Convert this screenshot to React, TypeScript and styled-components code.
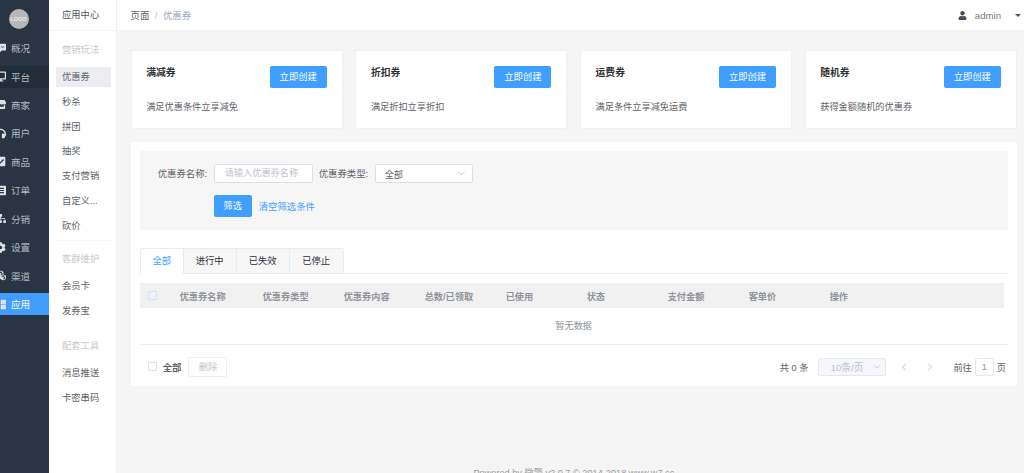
import styled, { createGlobalStyle } from 'styled-components';
import { ReactNode } from 'react';
import {
  FaDesktop,
  FaStore,
  FaHeadphones,
  FaCheckSquare,
  FaListAlt,
  FaSitemap,
  FaCog,
  FaCubes,
  FaThLarge,
  FaUser,
} from 'react-icons/fa';
import { FiChevronDown, FiChevronLeft, FiChevronRight } from 'react-icons/fi';

const GlobalStyle = createGlobalStyle`
  html, body {
    margin: 0;
    height: 100%;
    overflow: hidden;
    background: #f5f5f5;
    font-family: "Liberation Sans", "Noto Sans CJK SC", sans-serif;
  }
  * { box-sizing: border-box; }
`;

// wide speech bubble used for the overview entry
const OverviewIcon = () => (
  <svg width="13" height="10" viewBox="0 0 13 10">
    <path d="M1 0h11a1 1 0 0 1 1 1v6a1 1 0 0 1-1 1H8L6 10 5 8H1a1 1 0 0 1-1-1V1a1 1 0 0 1 1-1z" fill="currentColor" />
    <path d="M7 3l2 1.5L11 3" stroke="#293543" strokeWidth="1" fill="none" />
  </svg>
);

const navItems: { label: string; icon: ReactNode; state?: 'hover' | 'active' }[] = [
  { label: '概况', icon: <OverviewIcon /> },
  { label: '平台', icon: <FaDesktop />, state: 'hover' },
  { label: '商家', icon: <FaStore /> },
  { label: '用户', icon: <FaHeadphones /> },
  { label: '商品', icon: <FaCheckSquare /> },
  { label: '订单', icon: <FaListAlt /> },
  { label: '分销', icon: <FaSitemap /> },
  { label: '设置', icon: <FaCog /> },
  { label: '渠道', icon: <FaCubes /> },
  { label: '应用', icon: <FaThLarge />, state: 'active' },
];

const cards = [
  { title: '满减券', desc: '满足优惠条件立享减免' },
  { title: '折扣券', desc: '满足折扣立享折扣' },
  { title: '运费券', desc: '满足条件立享减免运费' },
  { title: '随机券', desc: '获得金额随机的优惠券' },
];

const columns = ['优惠券名称', '优惠券类型', '优惠券内容', '总数/已领取', '已使用', '状态', '支付金额', '客单价', '操作'];

const App = () => (
  <Layout>
    <GlobalStyle />
    <Sidebar>
      <Logo>LOGO</Logo>
      <NavList>
        {navItems.map((item) => (
          <NavItem key={item.label} $state={item.state}>
            <NavIcon>{item.icon}</NavIcon>
            {item.label}
          </NavItem>
        ))}
      </NavList>
    </Sidebar>

    <SubNav>
      <SubNavTitle>应用中心</SubNavTitle>
      <SubGroup>
        <GroupLabel>营销玩法</GroupLabel>
        <SubItem $selected>优惠券</SubItem>
        <SubItem>秒杀</SubItem>
        <SubItem>拼团</SubItem>
        <SubItem>抽奖</SubItem>
        <SubItem>支付营销</SubItem>
        <SubItem>自定义...</SubItem>
        <SubItem>砍价</SubItem>
      </SubGroup>
      <SubDivider />
      <SubGroup>
        <GroupLabel>客群维护</GroupLabel>
        <SubItem>会员卡</SubItem>
        <SubItem>发券宝</SubItem>
      </SubGroup>
      <SubGroup>
        <GroupLabel>配套工具</GroupLabel>
        <SubItem>消息推送</SubItem>
        <SubItem>卡密串码</SubItem>
      </SubGroup>
    </SubNav>

    <Main>
      <TopBar>
        <Crumbs>
          页面<CrumbSep>/</CrumbSep><CrumbCurrent>优惠券</CrumbCurrent>
        </Crumbs>
        <UserBox>
          <FaUser size={9} color="#4a4f57" />
          <UserName>admin</UserName>
          <Caret />
        </UserBox>
      </TopBar>

      <Content>
        <CardRow>
          {cards.map((card) => (
            <Card key={card.title}>
              <CardHead>
                <CardTitle>{card.title}</CardTitle>
                <CreateButton>立即创建</CreateButton>
              </CardHead>
              <CardDesc>{card.desc}</CardDesc>
            </Card>
          ))}
        </CardRow>

        <Panel>
          <FilterBox>
            <FilterRow>
              <FilterLabel>优惠券名称:</FilterLabel>
              <SearchField>请输入优惠券名称</SearchField>
              <FilterLabel>优惠券类型:</FilterLabel>
              <TypeSelect>
                全部
                <FiChevronDown size={11} color="#c0c4cc" />
              </TypeSelect>
            </FilterRow>
            <FilterActions>
              <FilterButton>筛选</FilterButton>
              <ClearLink>清空筛选条件</ClearLink>
            </FilterActions>
          </FilterBox>

          <Tabs>
            <Tab $active>全部</Tab>
            <Tab>进行中</Tab>
            <Tab>已失效</Tab>
            <Tab>已停止</Tab>
          </Tabs>

          <TableHead>
            <CheckCell><CheckBox $shaded /></CheckCell>
            {columns.map((name) => (
              <HeadCell key={name}>{name}</HeadCell>
            ))}
          </TableHead>
          <EmptyRow>暂无数据</EmptyRow>

          <TableFoot>
            <FootLeft>
              <CheckBox />
              <SelectAll>全部</SelectAll>
              <DeleteButton>删除</DeleteButton>
            </FootLeft>
            <Pager>
              <PagerTotal>共 0 条</PagerTotal>
              <PageSize>
                10条/页
                <FiChevronDown size={10} color="#c0c4cc" />
              </PageSize>
              <PageArrows>
                <FiChevronLeft size={12} color="#c0c4cc" />
                <FiChevronRight size={12} color="#c0c4cc" />
              </PageArrows>
              <GoTo>
                前往<PageInput>1</PageInput>页
              </GoTo>
            </Pager>
          </TableFoot>
        </Panel>

        <Footer>Powered by 微擎 v2.0.7 © 2014-2018 www.w7.cc</Footer>
      </Content>
    </Main>
  </Layout>
);

const Layout = styled.div`
  display: flex;
  height: 473px;
  overflow: hidden;
`;

const Sidebar = styled.aside`
  flex: 0 0 49px;
  background: #293543;
  overflow: hidden;
`;

const Logo = styled.div`
  width: 20px;
  height: 20px;
  margin: 8.5px 0 0 8.5px;
  border-radius: 50%;
  background: #b7b7b7;
  color: #eee;
  font-size: 5.5px;
  font-weight: 700;
  line-height: 20px;
  text-align: center;
`;

const NavList = styled.nav`
  display: flex;
  flex-direction: column;
  gap: 6.45px;
  margin-top: 8.6px;
`;

const NavItem = styled.div<{ $state?: 'hover' | 'active' }>`
  display: flex;
  align-items: center;
  height: 22px;
  font-size: 9.6px;
  color: ${(p) => (p.$state === 'active' ? '#fff' : '#b4bac1')};
  background: ${(p) =>
    p.$state === 'active' ? '#409eff' : p.$state === 'hover' ? '#222d3a' : 'transparent'};
`;

const NavIcon = styled.span`
  display: flex;
  flex: 0 0 auto;
  width: 11px;
  margin: 0 5.5px 0 -5.5px;
  font-size: 11px;
  color: #dfe2e5;
`;

const SubNav = styled.aside`
  flex: 0 0 68px;
  background: #fff;
  border-right: 1px solid #f0f0f0;
  font-size: 9.3px;
`;

const SubNavTitle = styled.div`
  height: 31px;
  padding-left: 13px;
  line-height: 30px;
  color: #4c5560;
  border-bottom: 1px solid #f2f2f2;
`;

const SubGroup = styled.div`
  padding: 12px 5px 0 7px;

  & + & {
    padding-top: 13.5px;
  }
`;

const GroupLabel = styled.div`
  height: 14px;
  padding-left: 6px;
  margin-bottom: 10px;
  line-height: 14px;
  color: #c8c8c8;
`;

const SubItem = styled.div<{ $selected?: boolean }>`
  height: 20px;
  margin-bottom: 4.75px;
  padding-left: 6px;
  border-radius: 1px;
  line-height: 20px;
  color: #606266;
  background: ${(p) => (p.$selected ? '#ecedf1' : 'transparent')};
`;

const SubDivider = styled.div`
  height: 1px;
  margin: 0 5px -1px 7px;
  background: #f5f5f5;
`;

const Main = styled.main`
  flex: 1;
  min-width: 0;
`;

const TopBar = styled.header`
  display: flex;
  align-items: center;
  justify-content: space-between;
  height: 30px;
  padding: 0 3px 0 13.5px;
  background: #fff;
  font-size: 9.4px;
`;

const Crumbs = styled.div`
  color: #606266;
`;

const CrumbSep = styled.span`
  margin: 0 5.5px;
  color: #c0c4cc;
`;

const CrumbCurrent = styled.span`
  color: #97a8be;
`;

const UserBox = styled.div`
  display: flex;
  align-items: center;
`;

const UserName = styled.span`
  margin: 0 14px 0 8px;
  color: #777;
  font-size: 9.6px;
`;

const Caret = styled.span`
  border: 3px solid transparent;
  border-top: 3px solid #555;
  border-bottom: 0;
`;

const Content = styled.div`
  padding: 20px 7px 0 13.7px;
`;

const CardRow = styled.div`
  display: grid;
  grid-template-columns: repeat(4, 212px);
  gap: 12.7px;
`;

const Card = styled.section`
  height: 79px;
  padding: 15px 15px 0 14.5px;
  background: #fff;
  border: 1px solid #f0f0f0;
`;

const CardHead = styled.div`
  display: flex;
  align-items: flex-start;
  justify-content: space-between;
`;

const CardTitle = styled.h3`
  margin: 0;
  font-size: 9.8px;
  font-weight: 700;
  line-height: 14px;
  color: #303133;
`;

const CreateButton = styled.div`
  width: 57px;
  height: 22px;
  border-radius: 2px;
  background: #409eff;
  color: #fff;
  font-size: 9.3px;
  line-height: 22px;
  text-align: center;
`;

const CardDesc = styled.p`
  margin: 12px 0 0;
  font-size: 9.2px;
  line-height: 14px;
  color: #606266;
`;

const Panel = styled.section`
  margin-top: 13px;
  padding: 9px 9px 0;
  height: 244px;
  background: #fff;
`;

const FilterBox = styled.div`
  height: 79px;
  padding: 13px 0 0 18px;
  background: #f6f6f7;
`;

const FilterRow = styled.div`
  display: flex;
  align-items: center;
  gap: 6px;
`;

const FilterLabel = styled.span`
  width: 50px;
  font-size: 9.4px;
  line-height: 19px;
  color: #606266;
  white-space: nowrap;
`;

const SearchField = styled.div`
  width: 99px;
  height: 19px;
  padding-left: 10px;
  border: 1px solid #dcdfe6;
  border-radius: 2px;
  background: #fff;
  color: #c0c4cc;
  font-size: 9.2px;
  line-height: 17px;
`;

const TypeSelect = styled.div`
  display: flex;
  align-items: center;
  justify-content: space-between;
  width: 98px;
  height: 19px;
  padding: 0 5px 0 9px;
  border: 1px solid #dcdfe6;
  border-radius: 2px;
  background: #fff;
  color: #606266;
  font-size: 9.2px;
`;

const FilterActions = styled.div`
  display: flex;
  align-items: center;
  gap: 7px;
  margin: 12px 0 0 56px;
`;

const FilterButton = styled.div`
  width: 38px;
  height: 22px;
  border-radius: 2px;
  background: #409eff;
  color: #fff;
  font-size: 9.2px;
  line-height: 22px;
  text-align: center;
`;

const ClearLink = styled.span`
  color: #409eff;
  font-size: 9.4px;
`;

const Tabs = styled.div`
  display: flex;
  margin-top: 18px;
  height: 26px;
  border-bottom: 1px solid #e9ebf0;
`;

const Tab = styled.div<{ $active?: boolean }>`
  width: 53px;
  height: 26px;
  border: 1px solid #e9ebf0;
  border-left-width: ${(p) => (p.$active ? '1px' : '0')};
  border-bottom-color: ${(p) => (p.$active ? '#fff' : '#e9ebf0')};
  background: ${(p) => (p.$active ? '#fff' : '#f7f7f8')};
  color: ${(p) => (p.$active ? '#409eff' : '#303133')};
  font-size: 9.3px;
  line-height: 24px;
  text-align: center;

  &:first-child {
    width: 44px;
    border-radius: 2px 0 0 0;
  }
  &:last-child {
    width: 54px;
    border-radius: 0 2px 0 0;
  }
`;

const TableHead = styled.div`
  display: grid;
  grid-template-columns: 40px 83px repeat(7, 81px) 1fr;
  align-items: center;
  width: 864px;
  height: 25px;
  margin-top: 9px;
  background: #f1f1f1;
`;

const CheckCell = styled.div`
  padding-left: 8px;
`;

const CheckBox = styled.span<{ $shaded?: boolean }>`
  display: block;
  width: 9px;
  height: 9px;
  border: 1px solid #dcdfe6;
  border-radius: 1px;
  background: ${(p) => (p.$shaded ? '#edf2fc' : '#fff')};
`;

const HeadCell = styled.div`
  color: #909399;
  font-size: 9.2px;
  font-weight: 700;
  white-space: nowrap;
`;

const EmptyRow = styled.div`
  width: 868px;
  height: 37px;
  border-bottom: 1px solid #ebeef5;
  color: #909399;
  font-size: 9.2px;
  line-height: 36px;
  text-align: center;
`;

const TableFoot = styled.div`
  display: flex;
  align-items: center;
  justify-content: space-between;
  height: 23px;
  margin-top: 10px;
  padding: 0 2px 0 8px;
`;

const FootLeft = styled.div`
  display: flex;
  align-items: center;
`;

const SelectAll = styled.span`
  margin: 0 7px 0 6px;
  color: #606266;
  font-size: 9.4px;
  font-weight: 700;
`;

const DeleteButton = styled.div`
  width: 39px;
  height: 20px;
  border: 1px solid #ebeef5;
  border-radius: 2px;
  color: #c0c4cc;
  font-size: 9.2px;
  line-height: 18px;
  text-align: center;
`;

const Pager = styled.div`
  display: flex;
  align-items: center;
  color: #606266;
  font-size: 9.2px;
`;

const PagerTotal = styled.span`
  margin-right: 10px;
`;

const PageSize = styled.div`
  display: flex;
  align-items: center;
  justify-content: space-between;
  width: 68px;
  height: 18px;
  padding: 0 3px 0 11px;
  border: 1px solid #e4e7ed;
  border-radius: 2px;
  background: #f5f7fa;
  color: #c0c4cc;
  font-size: 9.8px;
`;

const PageArrows = styled.div`
  display: flex;
  gap: 14px;
  margin: 0 17px 0 12px;
`;

const GoTo = styled.div`
  display: flex;
  align-items: center;
`;

const PageInput = styled.span`
  width: 19px;
  height: 18px;
  margin: 0 3px;
  border: 1px solid #e4e7ed;
  border-radius: 2px;
  color: #909399;
  line-height: 16px;
  text-align: center;
`;

const Footer = styled.footer`
  margin-top: 79px;
  color: #9a9a9a;
  font-size: 9.2px;
  text-align: center;
`;

export default App;
